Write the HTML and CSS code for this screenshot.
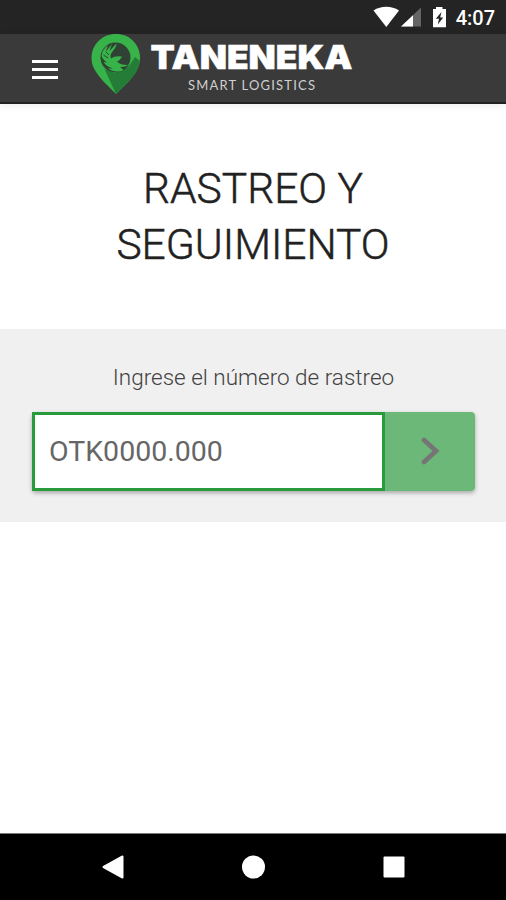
FILE: index.html
```html
<!DOCTYPE html>
<html lang="es">
<head>
    <meta charset="UTF-8">
    <meta name="viewport" content="width=device-width, initial-scale=1.0">
    <title>Taneneka Smart Logistics</title>
    <link rel="stylesheet" href="styles.css">
</head>
<body>

    <div class="status-bar">
        <!-- wifi, signal, battery -->
        <svg class="status-icons" width="76" height="24" viewBox="0 0 76 24">
            <path fill="#fff" d="M0.5 6.6C8 1.6 18.5 1.6 26 6.6L13.3 23Z"/>
            <path fill="#656565" d="M48 3.5V22.5H28Z"/>
            <path fill="#fff" d="M40 11.2V22.5H28Z"/>
            <path fill="#fff" d="M63 3H69.5V5H73V23.2H60V5H63Z"/>
            <path fill="#242424" d="M68.4 8L62.8 14.8H66L64.8 20.5L70.3 13.4H67.2Z"/>
        </svg>
        <span class="clock">4:07</span>
    </div>

    <header class="toolbar">
        <button class="menu-button" aria-label="Menú">
            <span></span>
            <span></span>
            <span></span>
        </button>
        <svg class="logo" width="264" height="62" viewBox="0 0 264 62">
            <!-- pin -->
            <path fill="#37b34a" d="M25 0C11 0 .5 10.500 .5 24C.5 33 6 40 12 47L25 60L38 47C44 40 49 33 49 24C49 10.500 39 0 25 0Z"/>
            <path fill="#237d36" d="M38 32L44 23L48.800 27C48 35 44 41 38 47L25 60L13.500 35L24 39Z"/>
            <!-- claw inside the pin -->
            <circle cx="24.500" cy="23.500" r="15" fill="#2f4234"/>
            <path fill="#37b34a" d="M10.500 22C11 17 13.500 13.500 17 11.500L14.500 18L21 9.800L18.500 17L25.500 9.500Q25.500 13 21.500 17.500Q18.500 21 20 24.500Q24 21.500 31 22.500Q29.500 26 26 27.500Q29 31 37 31Q34 33.500 29 33Q31 34.500 32.500 36C28 38.500 21 38 17 34.500L22 34.500C17 33 14 31 12.500 28L16 28.500C13 26.500 11.500 24.500 10.500 22Z"/>
            <path fill="none" stroke="#2c4a32" stroke-width="1" d="M12.500 21L17 24M15 18L18 21"/>
            <text class="logo-name" x="59.500" y="35" textLength="202" lengthAdjust="spacingAndGlyphs">TANENEKA</text>
            <text class="logo-tag" x="97" y="55.500" textLength="127" lengthAdjust="spacing">SMART LOGISTICS</text>
        </svg>
    </header>

    <main>
        <h1>RASTREO Y<br>SEGUIMIENTO</h1>

        <section class="tracking">
            <label for="trackingInput">Ingrese el número de rastreo</label>
            <div class="tracking-form">
                <input type="text" id="trackingInput" placeholder="OTK0000.000">
                <button class="search-button" aria-label="Buscar">
                    <svg width="20" height="30" viewBox="0 0 20 30">
                        <path d="M4 3L16 14L4 25" fill="none" stroke="#757575" stroke-width="4.800" stroke-linecap="round"/>
                    </svg>
                </button>
            </div>
        </section>
    </main>

    <nav class="nav-bar">
        <svg width="24" height="26" viewBox="0 0 24 26">
            <path fill="#fff" stroke="#fff" stroke-width="2" stroke-linejoin="round" d="M2.500 13L21.500 2.500V23.500Z"/>
        </svg>
        <svg width="24" height="26" viewBox="0 0 24 26">
            <circle cx="11.500" cy="13" r="11.500" fill="#fff"/>
        </svg>
        <svg width="24" height="26" viewBox="0 0 24 26">
            <rect x="1.500" y="2.500" width="21" height="21" rx="1" fill="#fff"/>
        </svg>
    </nav>

</body>
</html>
```
FILE: styles.css
```css
* {
    box-sizing: border-box;
}

body {
    margin: 0;
    min-height: 100vh;
    display: flex;
    flex-direction: column;
    background-color: #fff;
    font-family: Roboto, "Liberation Sans", sans-serif;
}

/* Android status bar */
.status-bar {
    display: flex;
    justify-content: flex-end;
    align-items: center;
    gap: 7px;
    height: 34px;
    padding: 2px 11px 0 0;
    background-color: #242424;
    color: #fff;
}

.status-icons {
    margin-top: -4px;
}

.clock {
    font-size: 20px;
    font-weight: 500;
    line-height: 24px;
}

.toolbar {
    display: flex;
    align-items: flex-start;
    height: 70px;
    padding-left: 32px;
    background-color: #3a3a3a;
    border-bottom: 2px solid #202020;
    box-shadow: 0 2px 8px rgba(0, 0, 0, 0.08);
}

.menu-button {
    display: flex;
    flex-direction: column;
    gap: 5px;
    width: 26px;
    margin: 26px 33px 0 0;
    padding: 0;
    border: none;
    background: none;
}

.menu-button span {
    height: 3px;
    width: 100%;
    background-color: #fff;
}

.logo {
    display: block;
}

.logo-name {
    font-family: Inter, sans-serif;
    font-size: 33px;
    font-weight: 900;
    fill: #fff;
    stroke: #fff;
    stroke-width: 0.5px;
}

.logo-tag {
    font-family: Lato, sans-serif;
    font-size: 13px;
    fill: #d0d0d0;
}

main {
    flex: 1;
}

h1 {
    margin: 0;
    padding: 57px 0 56px;
    font-size: 42.5px;
    font-weight: 300;
    line-height: 56px;
    text-align: center;
    color: #212121;
    -webkit-text-stroke: 0.5px #212121;
}

/* Tracking number form */
.tracking {
    height: 193px;
    padding: 33px 31px 0 32px;
    background-color: #f0f0f0;
    text-align: center;
}

.tracking label {
    display: block;
    font-size: 22.5px;
    font-weight: 300;
    line-height: 30px;
    color: #424242;
}

.tracking-form {
    display: flex;
    height: 79px;
    margin-top: 20px;
    border-radius: 4px;
    box-shadow: 0 2px 4px rgba(0, 0, 0, 0.3);
}

.tracking-form input {
    flex: 1;
    min-width: 0;
    padding: 0 14px;
    border: 3px solid #289b3c;
    border-radius: 0;
    background-color: #fff;
    font-family: inherit;
    font-size: 28.5px;
    color: #616161;
}

.tracking-form input::placeholder {
    color: #666;
}

.search-button {
    display: flex;
    align-items: center;
    justify-content: center;
    width: 90px;
    padding: 0;
    border: none;
    border-radius: 0 4px 4px 0;
    background-color: #6cb878;
}

/* Android navigation bar */
.nav-bar {
    display: flex;
    justify-content: space-between;
    align-items: center;
    height: 67px;
    padding: 0 100px 0 101px;
    border-top: 1px solid #777;
    background-color: #000;
}
```
